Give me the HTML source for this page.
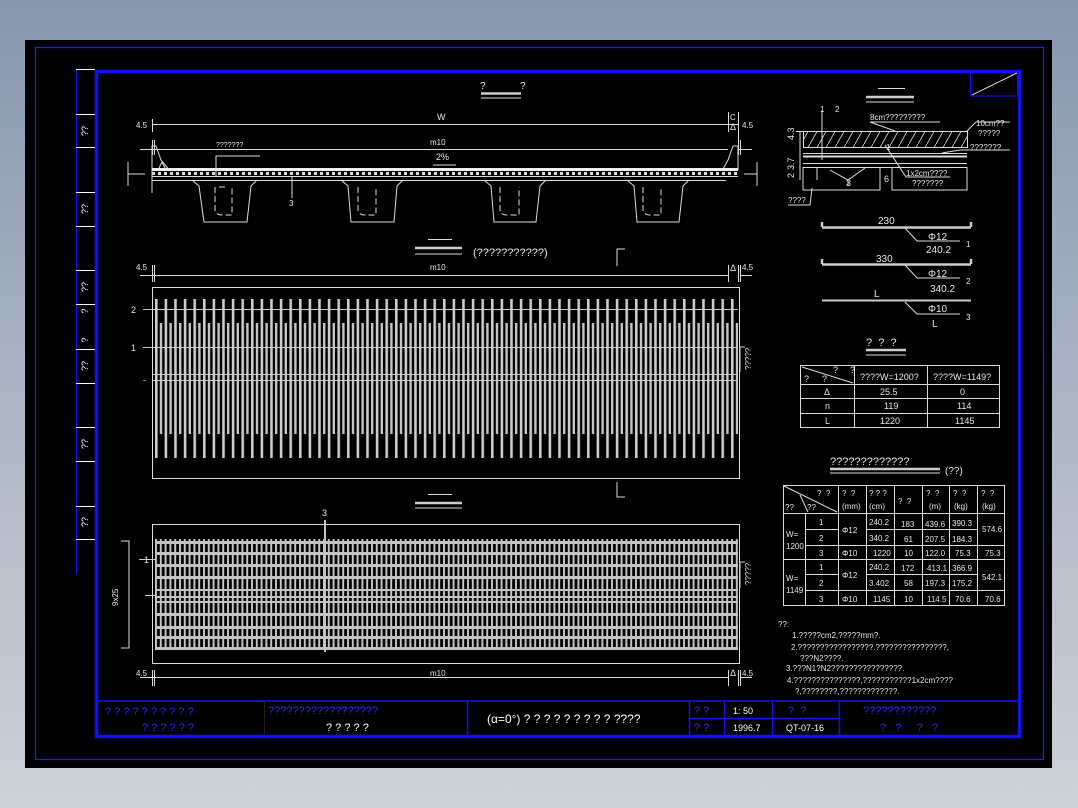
<!DOCTYPE html>
<html><head><meta charset="utf-8"><style>
html,body{margin:0;padding:0;}
body{width:1078px;height:808px;overflow:hidden;background:linear-gradient(#8797ad,#b4bcc8 60%,#cdd1d8);}
svg{position:absolute;left:0;top:0;}
text{font-family:"Liberation Sans","DejaVu Sans",sans-serif;}
</style></head><body>
<svg width="1078" height="808" viewBox="0 0 1078 808" xmlns="http://www.w3.org/2000/svg">
<defs>
<pattern id="pl" x="155" y="0" width="9.6" height="10" patternUnits="userSpaceOnUse"><rect x="0" y="0" width="2.6" height="10" fill="#cccccc"/></pattern>
<pattern id="ps" x="159.8" y="0" width="9.6" height="10" patternUnits="userSpaceOnUse"><rect x="0" y="0" width="2.4" height="10" fill="#c4c4c4"/></pattern>
<pattern id="pg" x="155" y="0" width="4.8" height="10" patternUnits="userSpaceOnUse"><rect x="0" y="0" width="2" height="10" fill="#c4c4c4"/></pattern>
<pattern id="hatch" x="0" y="0" width="9" height="16" patternUnits="userSpaceOnUse"><path d="M0 16 L9 0" stroke="#ddd" stroke-width="0.8"/></pattern>
<pattern id="dash" x="152" y="0" width="6" height="6" patternUnits="userSpaceOnUse"><rect x="0" y="0" width="3" height="6" fill="#ddd"/></pattern>
</defs>
<rect x="25" y="40" width="1027" height="728" fill="#000"/>
<rect x="35.5" y="47.5" width="1008" height="712" fill="none" stroke="#2020ff" stroke-width="1.2"/>
<rect x="96.5" y="71.5" width="923" height="665" fill="none" stroke="#1010ff" stroke-width="3.5"/>
<!-- left strip -->
<g stroke="#1010ff" stroke-width="1"><line x1="76.5" y1="69" x2="76.5" y2="574"/></g>
<g stroke="#fff" stroke-width="1">
<line x1="76" y1="69.5" x2="95" y2="69.5"/><line x1="76" y1="114.5" x2="95" y2="114.5"/><line x1="76" y1="147.5" x2="95" y2="147.5"/><line x1="76" y1="192.5" x2="95" y2="192.5"/><line x1="76" y1="226.5" x2="95" y2="226.5"/><line x1="76" y1="270.5" x2="95" y2="270.5"/><line x1="76" y1="304.5" x2="95" y2="304.5"/><line x1="76" y1="349.5" x2="95" y2="349.5"/><line x1="76" y1="383.5" x2="95" y2="383.5"/><line x1="76" y1="427.5" x2="95" y2="427.5"/><line x1="76" y1="461.5" x2="95" y2="461.5"/><line x1="76" y1="506.5" x2="95" y2="506.5"/><line x1="76" y1="539.5" x2="95" y2="539.5"/>
</g>
<g fill="#fff" font-size="9">
<text transform="translate(88,131) rotate(-90)" text-anchor="middle">??</text>
<text transform="translate(88,209) rotate(-90)" text-anchor="middle">??</text>
<text transform="translate(88,287) rotate(-90)" text-anchor="middle">??</text>
<text transform="translate(88,311) rotate(-90)" text-anchor="middle">?</text>
<text transform="translate(88,340) rotate(-90)" text-anchor="middle">?</text>
<text transform="translate(88,366) rotate(-90)" text-anchor="middle">??</text>
<text transform="translate(88,444) rotate(-90)" text-anchor="middle">??</text>
<text transform="translate(88,522) rotate(-90)" text-anchor="middle">??</text>
</g>
<!-- corner -->
<rect x="970.5" y="72" width="47" height="24" fill="none" stroke="#1010ff" stroke-width="1"/>
<line x1="972" y1="95" x2="1017" y2="73" stroke="#fff" stroke-width="0.8"/>

<g stroke="#ddd" stroke-width="1" fill="none">
<line x1="481" y1="93.5" x2="521" y2="93.5" stroke-width="2.5" stroke="#ccc"/><line x1="481" y1="98" x2="521" y2="98"/>
<line x1="152" y1="124.5" x2="738" y2="124.5"/><line x1="152.5" y1="119" x2="152.5" y2="132"/><line x1="738.5" y1="112" x2="738.5" y2="155"/><line x1="728.5" y1="112" x2="728.5" y2="132"/>
<line x1="140" y1="149.5" x2="728" y2="149.5"/><line x1="152.5" y1="140" x2="152.5" y2="155"/><line x1="154.5" y1="140" x2="154.5" y2="155"/><line x1="738" y1="149.5" x2="752" y2="149.5"/><line x1="740.5" y1="140" x2="740.5" y2="155"/>
<path d="M152 193 V170 M152 170 H158 L162 162 L166 170"/>
<path d="M152 170 V146 H156 L161 160 L170 171"/>
<path d="M738 170 V146 H733 L728 160 L722 171"/>
<rect x="152" y="168" width="586" height="3" fill="#eee" stroke="none"/>
<rect x="152" y="172" width="586" height="3" fill="url(#dash)" stroke="none"/>
<line x1="152" y1="176.5" x2="738" y2="176.5"/>
<line x1="152" y1="180.5" x2="726" y2="180.5"/>
<path d="M192 180 L199 186 L204 222 H247 L251 186 L257 180"/>
<path d="M341 180 L348 186 L351 222 H394 L397 186 L403 180"/>
<path d="M484 180 L491 186 L494 222 H536 L540 186 L546 180"/>
<path d="M627 180 L634 186 L637 222 H679 L683 186 L689 180"/>
<path d="M215 187 V210 Q216 215 222 215 H232 V187 M219 187 H228" stroke-dasharray="6 3"/>
<path d="M358 187 V210 Q359 215 365 215 H376 V187" stroke-dasharray="6 3"/>
<path d="M500 187 V210 Q501 215 507 215 H519 V187" stroke-dasharray="6 3"/>
<path d="M643 187 V210 Q644 215 650 215 H661 V187" stroke-dasharray="6 3"/>
<path d="M216 176 V156 H260"/><path d="M292 176 V198"/><path d="M433 165 H456"/>
<path d="M128 162 V186 M128 174 H145"/><path d="M757 162 V186 M744 174 H757"/>
<line x1="428" y1="239.5" x2="452" y2="239.5"/><line x1="415" y1="248" x2="462" y2="248" stroke-width="2.5" stroke="#ccc"/><line x1="415" y1="254" x2="462" y2="254"/>
<path d="M617 266 V249 H625"/>
<line x1="140" y1="275.5" x2="728" y2="275.5"/><line x1="152.5" y1="265" x2="152.5" y2="282"/><line x1="154.5" y1="265" x2="154.5" y2="282"/><line x1="728.5" y1="265" x2="728.5" y2="282"/><line x1="738.5" y1="265" x2="738.5" y2="282"/><line x1="740.5" y1="265" x2="740.5" y2="282"/><line x1="740" y1="275.5" x2="752" y2="275.5"/>
<rect x="152.5" y="287.5" width="587" height="191"/>
<path d="M617 482 V497 H625"/>
</g>
<rect x="155" y="299" width="583" height="159" fill="url(#pl)"/>
<rect x="155" y="323" width="583" height="111" fill="url(#ps)"/>
<g stroke="#ccc" stroke-width="1">
<line x1="143" y1="309.5" x2="738" y2="309.5"/><line x1="143" y1="347.5" x2="738" y2="347.5"/><line x1="152" y1="374.5" x2="738" y2="374.5"/><line x1="152" y1="380.5" x2="738" y2="380.5"/>
<path d="M740 347 V372 M740 347 H745"/>
</g>
<g stroke="#ddd" stroke-width="1" fill="none">
<line x1="428" y1="494.5" x2="452" y2="494.5"/><line x1="415" y1="503" x2="462" y2="503" stroke-width="2.5" stroke="#ccc"/><line x1="415" y1="508" x2="462" y2="508"/>
<rect x="152.5" y="524.5" width="587" height="139"/>
<path d="M121 541 H129 V648 H121"/>
<line x1="140" y1="677.5" x2="728" y2="677.5"/><line x1="152.5" y1="670" x2="152.5" y2="686"/><line x1="154.5" y1="670" x2="154.5" y2="686"/><line x1="728.5" y1="670" x2="728.5" y2="686"/><line x1="738.5" y1="670" x2="738.5" y2="686"/><line x1="740.5" y1="670" x2="740.5" y2="686"/><line x1="740" y1="677.5" x2="752" y2="677.5"/>
</g>
<rect x="155" y="539" width="583" height="111" fill="url(#pg)"/>
<g fill="#c4c4c4">
<rect x="155" y="541" width="583" height="3"/><rect x="155" y="552" width="583" height="3"/><rect x="155" y="564" width="583" height="3"/><rect x="155" y="576" width="583" height="3"/><rect x="155" y="589" width="583" height="2"/><rect x="155" y="596" width="583" height="2"/><rect x="155" y="601" width="583" height="2"/><rect x="155" y="613" width="583" height="3"/><rect x="155" y="626" width="583" height="3"/><rect x="155" y="636" width="583" height="3"/><rect x="155" y="647" width="583" height="3"/>
<rect x="324" y="520" width="2" height="132"/>
</g>
<g stroke="#ccc"><line x1="139" y1="559.5" x2="155" y2="559.5"/><line x1="145" y1="595.5" x2="155" y2="595.5"/><path d="M740 562 V588 M740 562 H745" fill="none"/></g>

<g stroke="#ddd" stroke-width="1" fill="none">
<line x1="878" y1="88.5" x2="905" y2="88.5"/><line x1="866" y1="97" x2="914" y2="97" stroke-width="2.5" stroke="#ccc"/><line x1="866" y1="102" x2="914" y2="102"/>
<rect x="803.5" y="131.5" width="164" height="16" fill="url(#hatch)"/>
<line x1="803" y1="153.5" x2="967" y2="153.5"/><line x1="803" y1="156.5" x2="967" y2="156.5" stroke-width="2"/><line x1="803" y1="163.5" x2="967" y2="163.5"/><line x1="803" y1="167.5" x2="967" y2="167.5"/>
<path d="M803 167 V190 H880 V167 M892 167 V190 H967 V167"/>
<path d="M822 110 V160 M817 167 V180" />
<path d="M870 122 H940 M895 131 L870 122"/><path d="M967 131 L976 122 H1010"/>
<path d="M942 153 L960 150 H1010"/>
<path d="M885 145 L906 177 H950"/>
<path d="M830 170 L848 180 L865 168 M848 180 V186"/>
<path d="M812 188 L810 205 H788"/>
<line x1="800" y1="131" x2="800" y2="180"/><line x1="796" y1="131.5" x2="803" y2="131.5"/>
<path d="M822 227.5 H971 M822 227 V222 M971 227 V222" stroke-width="2.5" stroke="#ccc"/>
<path d="M905 228 L917 241 H960"/>
<path d="M822 264.5 H971 M822 264 V259 M971 264 V259" stroke-width="2.5" stroke="#ccc"/>
<path d="M905 265 L917 278 H960"/>
<path d="M822 300.5 H971" stroke-width="2" stroke="#ccc"/>
<path d="M905 302 L917 314 H960"/>
<line x1="866" y1="350" x2="906" y2="350" stroke-width="2.5" stroke="#ccc"/><line x1="866" y1="355" x2="906" y2="355"/>
<rect x="800.5" y="365.5" width="199" height="62"/>
<line x1="800" y1="384.5" x2="1000" y2="384.5"/><line x1="800" y1="398.5" x2="1000" y2="398.5"/><line x1="800" y1="413.5" x2="1000" y2="413.5"/>
<line x1="854.5" y1="365" x2="854.5" y2="428"/><line x1="927.5" y1="365" x2="927.5" y2="428"/>
<line x1="802" y1="367" x2="853" y2="383"/>
<line x1="830" y1="469" x2="940" y2="469" stroke-width="2.5" stroke="#ccc"/><line x1="830" y1="473" x2="940" y2="473"/>
<rect x="783.5" y="485.5" width="221" height="120"/>
<line x1="783" y1="513.5" x2="1005" y2="513.5"/><line x1="783" y1="559.5" x2="1005" y2="559.5"/>
<line x1="805" y1="529.5" x2="838" y2="529.5"/><line x1="805" y1="545.5" x2="1005" y2="545.5"/>
<line x1="805" y1="574.5" x2="838" y2="574.5"/><line x1="805" y1="590.5" x2="1005" y2="590.5"/>
<line x1="866" y1="529.5" x2="977" y2="529.5"/><line x1="866" y1="574.5" x2="977" y2="574.5"/>
<line x1="805.5" y1="513" x2="805.5" y2="606"/><line x1="838.5" y1="485" x2="838.5" y2="606"/><line x1="866.5" y1="485" x2="866.5" y2="606"/><line x1="894.5" y1="485" x2="894.5" y2="606"/><line x1="922.5" y1="485" x2="922.5" y2="606"/><line x1="949.5" y1="485" x2="949.5" y2="606"/><line x1="977.5" y1="485" x2="977.5" y2="606"/>
<line x1="784" y1="486" x2="837" y2="512"/><line x1="800" y1="495" x2="808" y2="512"/>
</g>

<g fill="#e8e8e8" font-size="10">
<text x="480" y="89">?</text><text x="520" y="89">?</text>
<text x="437" y="120" font-size="9">W</text><text x="730" y="120" font-size="8">C</text>
<text x="136" y="128" font-size="8">4.5</text><text x="742" y="128" font-size="8">4.5</text>
<text x="430" y="145" font-size="8">m10</text><text x="730" y="130" font-size="9">Δ</text>
<text x="216" y="147" font-size="7">???????</text>
<text x="436" y="160" font-size="9">2%</text>
<text x="289" y="206" font-size="8">3</text>
<text x="473" y="256" font-size="11">(???????????)</text>
<text x="136" y="270" font-size="8">4.5</text><text x="430" y="270" font-size="8">m10</text><text x="730" y="271" font-size="9">Δ</text><text x="742" y="270" font-size="8">4.5</text>
<text x="131" y="313" font-size="9">2</text><text x="131" y="351" font-size="9">1</text><text x="143" y="383" font-size="9">-</text>
<text transform="translate(751,370) rotate(-90)" font-size="8">?????</text>
<text x="322" y="516" font-size="9">3</text>
<text x="144" y="563" font-size="9">1</text>
<text transform="translate(118,606) rotate(-90)" font-size="8">9x25</text>
<text transform="translate(751,585) rotate(-90)" font-size="8">?????</text>
<text x="136" y="676" font-size="8">4.5</text><text x="430" y="676" font-size="8">m10</text><text x="730" y="676" font-size="9">Δ</text><text x="742" y="676" font-size="8">4.5</text>
<text x="820" y="112" font-size="8">1</text><text x="835" y="112" font-size="8">2</text>
<text x="870" y="120" font-size="8">8cm?????????</text>
<text x="976" y="126" font-size="8">10cm??</text><text x="978" y="136" font-size="8">?????</text>
<text x="970" y="150" font-size="8">???????</text>
<text x="906" y="176" font-size="8">1x2cm????</text><text x="912" y="186" font-size="8">???????</text>
<text x="846" y="186" font-size="9">3</text><text x="884" y="182" font-size="9">6</text><text x="886" y="150" font-size="8">1</text>
<text x="788" y="203" font-size="8">????</text>
<text transform="translate(794,170) rotate(-90)" font-size="9">3.7</text>
<text transform="translate(794,140) rotate(-90)" font-size="9">4.3</text>
<text transform="translate(794,178) rotate(-90)" font-size="9">2</text>
<text x="878" y="224" font-size="10">230</text><text x="928" y="240" font-size="10">Φ12</text><text x="926" y="253" font-size="10">240.2</text><text x="966" y="247" font-size="8">1</text>
<text x="876" y="262" font-size="10">330</text><text x="928" y="277" font-size="10">Φ12</text><text x="930" y="292" font-size="10">340.2</text><text x="966" y="284" font-size="8">2</text>
<text x="874" y="297" font-size="10">L</text><text x="928" y="312" font-size="10">Φ10</text><text x="932" y="327" font-size="10">L</text><text x="966" y="320" font-size="8">3</text>
<text x="866" y="346" font-size="11">? &#160;? &#160;?</text>
<g font-size="9">
<text x="833" y="373">?</text><text x="850" y="373">?</text><text x="804" y="382">?</text><text x="822" y="382">?</text>
<text x="860" y="380">????W=1200?</text><text x="933" y="380">????W=1149?</text>
<text x="824" y="395">Δ</text><text x="880" y="395">25.5</text><text x="960" y="395">0</text>
<text x="825" y="409">n</text><text x="884" y="409">119</text><text x="957" y="409">114</text>
<text x="825" y="424">L</text><text x="880" y="424">1220</text><text x="955" y="424">1145</text>
</g>
<text x="830" y="465" font-size="11">?????????????</text><text x="945" y="474" font-size="10">(??)</text>
<g font-size="8">
<text x="817" y="496">? &#160;?</text><text x="785" y="510">??</text><text x="807" y="510">??</text>
<text x="842" y="496">? &#160;?</text><text x="842" y="509">(mm)</text>
<text x="869" y="496">? ? ?</text><text x="869" y="509">(cm)</text>
<text x="898" y="504">? &#160;?</text>
<text x="926" y="496">? &#160;?</text><text x="929" y="509">(m)</text>
<text x="953" y="496">? &#160;?</text><text x="954" y="509">(kg)</text>
<text x="981" y="496">? &#160;?</text><text x="982" y="509">(kg)</text>
<text x="786" y="537">W=</text><text x="786" y="549">1200</text>
<text x="786" y="581">W=</text><text x="786" y="593">1149</text>
<text x="819" y="525">1</text><text x="819" y="541">2</text><text x="819" y="556">3</text>
<text x="819" y="570">1</text><text x="819" y="586">2</text><text x="819" y="602">3</text>
<text x="842" y="533">Φ12</text><text x="842" y="556">Φ10</text><text x="842" y="578">Φ12</text><text x="842" y="602">Φ10</text>
<text x="869" y="525">240.2</text><text x="869" y="541">340.2</text><text x="873" y="556">1220</text>
<text x="869" y="570">240.2</text><text x="869" y="586">3.402</text><text x="873" y="602">1145</text>
<text x="901" y="527">183</text><text x="904" y="542">61</text><text x="904" y="556">10</text>
<text x="901" y="571">172</text><text x="904" y="586">58</text><text x="904" y="602">10</text>
<text x="925" y="527">439.6</text><text x="925" y="542">207.5</text><text x="925" y="556">122.0</text>
<text x="927" y="571">413.1</text><text x="925" y="586">197.3</text><text x="927" y="602">114.5</text>
<text x="952" y="526">390.3</text><text x="952" y="542">184.3</text><text x="955" y="556">75.3</text>
<text x="952" y="571">366.9</text><text x="952" y="586">175.2</text><text x="955" y="602">70.6</text>
<text x="982" y="532">574.6</text><text x="985" y="556">75.3</text><text x="982" y="580">542.1</text><text x="985" y="602">70.6</text>
</g>
<g font-size="8">
<text x="778" y="627">??:</text>
<text x="792" y="638">1.?????cm2,?????mm?.</text>
<text x="791" y="650">2.?????????????????.????????????????,</text>
<text x="800" y="661">???N2????.</text>
<text x="786" y="671">3.???N1?N2????????????????.</text>
<text x="787" y="683">4.???????????????,???????????1x2cm????</text>
<text x="795" y="694">?,????????,?????????????.</text>
</g>
</g>

<g stroke="#1010ff" stroke-width="1.5" fill="none">
<line x1="96" y1="701" x2="1020" y2="701"/>
<line x1="264.5" y1="701" x2="264.5" y2="736" stroke="#222" stroke-width="1"/>
<line x1="467.5" y1="701" x2="467.5" y2="736"/>
<line x1="689.5" y1="701" x2="689.5" y2="736"/>
<line x1="724.5" y1="701" x2="724.5" y2="736"/>
<line x1="772.5" y1="701" x2="772.5" y2="736"/>
<line x1="839.5" y1="701" x2="839.5" y2="736"/>
<line x1="689" y1="718.5" x2="839" y2="718.5"/>
</g>
<g fill="#2a2aff" font-size="11">
<text x="105" y="715">? ? ? ? ? ? ? ? ? ?</text>
<text x="142" y="731">? ? ? ? ? ?</text>
<text x="268" y="714">??????????????????</text>
<text x="694" y="714">? ?</text><text x="694" y="731">? ?</text>
<text x="788" y="714">? &#160;?</text>
<text x="863" y="714">????????????</text>
<text x="880" y="731">? &#160; ? &#160; &#160; ? &#160; ?</text>
</g>
<g fill="#fff">
<text x="326" y="731" font-size="11">? ? ? ? ?</text>
<text x="487" y="723" font-size="12">(α=0°) ? ? ? ? ? ? ? ? ? ????</text>
<text x="733" y="714" font-size="9">1: 50</text>
<text x="733" y="731" font-size="9">1996.7</text>
<text x="786" y="731" font-size="9">QT-07-16</text>
</g>
</svg>
</body></html>
